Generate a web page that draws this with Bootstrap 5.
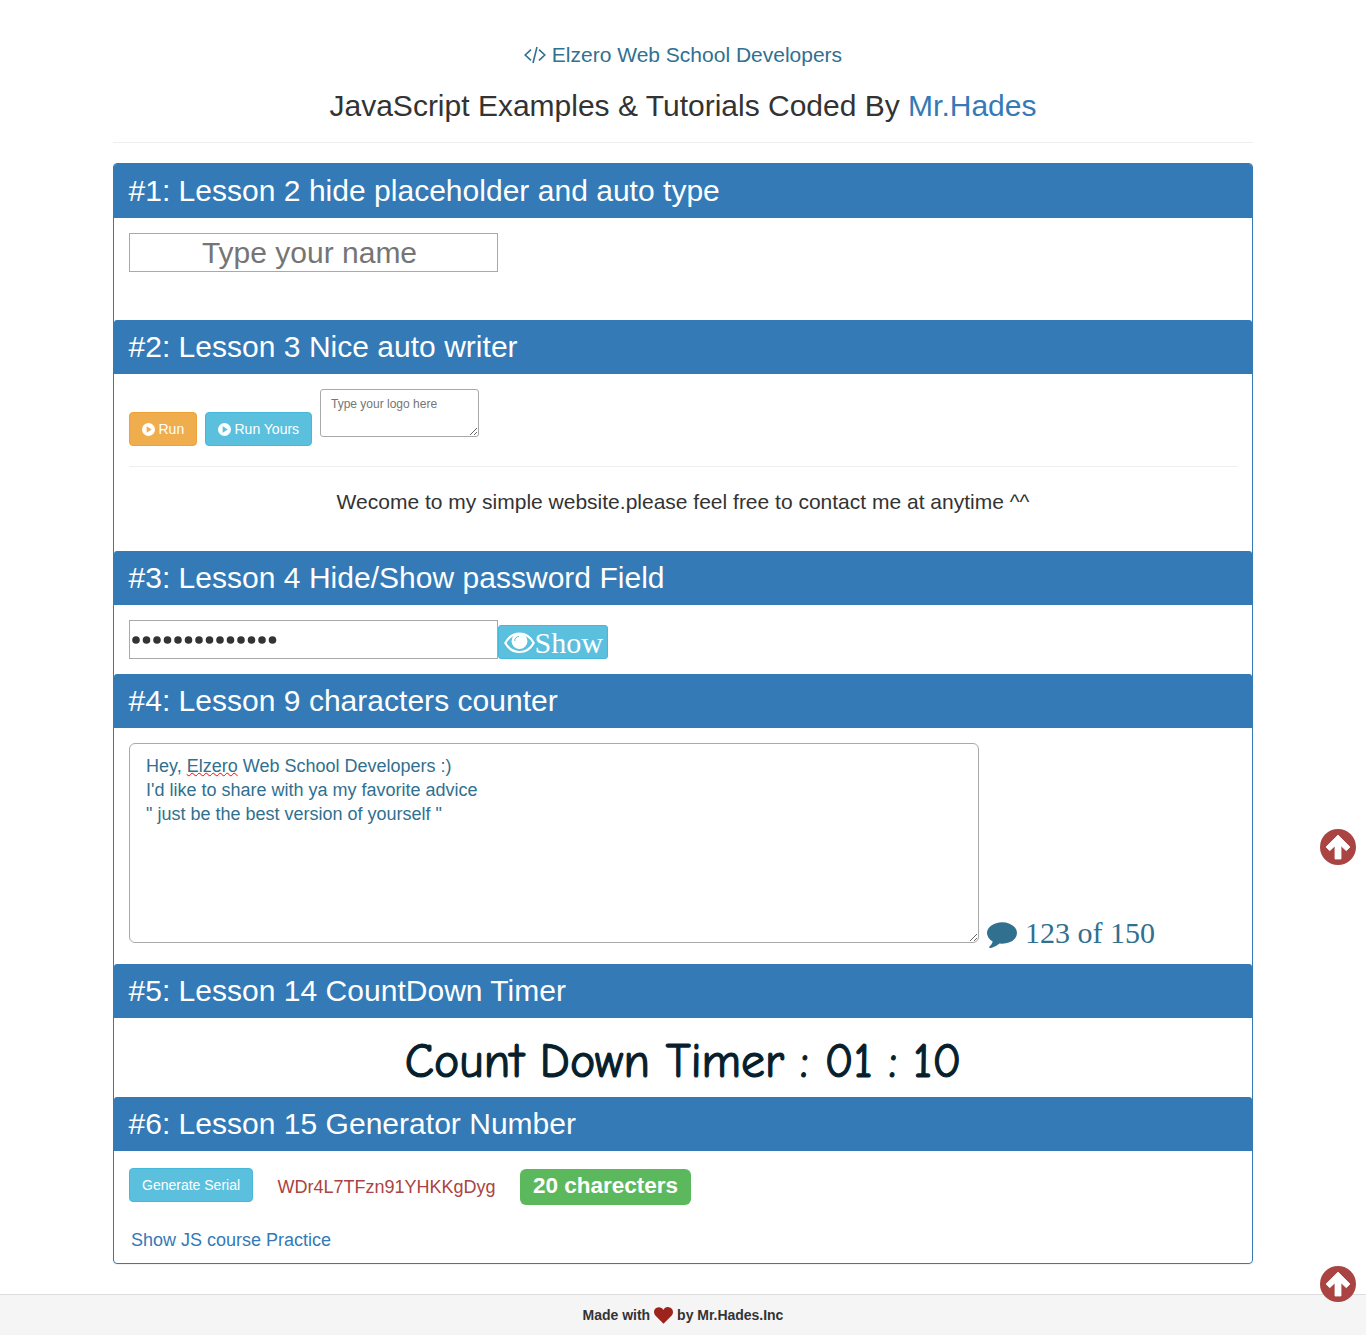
<!DOCTYPE html>
<html lang="en">
<head>
<meta charset="utf-8">
<meta name="viewport" content="width=device-width, initial-scale=1">
<title>Elzero Web School Developers</title>
<link href="https://cdn.jsdelivr.net/npm/bootstrap@5.3.0/dist/css/bootstrap.min.css" rel="stylesheet">
<style>
body{font-family:"Liberation Sans",Arial,sans-serif;font-size:14px;color:#333;line-height:1.42857;height:1335px;overflow:hidden}
a{text-decoration:none;color:#337ab7}
svg{display:block;flex:none}
.wrap{width:1140px;padding-top:.1px}
.brandline{font-size:21px;line-height:30px;color:#31708f;margin-top:40px;height:30px;gap:6px}
.title{font-size:30px;line-height:33px;margin:19px 0 20px;height:33px}
.rule{height:1px;background:#eee}
.panelbox{border:1px solid #337ab7;border-radius:4px;margin-top:20px;height:1101px;box-shadow:0 1px 1px rgba(0,0,0,.05)}
.head{background:#337ab7;color:#fff;height:54px;padding:10px 14.5px;font-size:30px;line-height:33px;letter-spacing:.02px;margin:0;border-radius:3px 3px 0 0;font-weight:400}
.pane{padding:15px}
.pane-1{height:102px}.pane-2{height:177px}.pane-3{height:69px}.pane-4{height:236px}.pane-5{height:79px}
.runbar{height:57px;margin-bottom:20px}
.field{width:369px;height:39px;border:1px solid #a9a9a9;padding:1px 2px;font-size:30px;color:#333;line-height:35px;border-radius:0;background:#fff}
.field::placeholder{color:#757575}
.field-name{padding-right:10px}
.btnx{height:34px;border-radius:4px;color:#fff;font-size:14px;padding:1px 12px 0;border:1px solid;white-space:nowrap}
.btn-run{gap:4px;padding-left:11px}
.btn-run svg{margin-left:.5px}
.btn-o{background:#f0ad4e;border-color:#eea236;width:68px}
.btn-b{background:#5bc0de;border-color:#46b8da}
.btn-yours{width:107px}
.btn-gen{width:124px;padding-top:2px}
.logo-in{width:159px;height:48px;border:1px solid #a9a9a9;border-radius:3px;padding:5px 10px;font-size:12px;line-height:18px;resize:both}
.logo-in::placeholder{color:#757575}
.writer{font-size:21px;line-height:28px;margin-top:21px}
.show{font-family:"Liberation Serif",serif;font-size:30px;width:110px;border-radius:3px;padding:2px 4.5px 0;line-height:34px}
.advice{width:850px;height:200px;border:1px solid #a9a9a9;border-radius:6px;padding:10px 16px;font-size:18px;line-height:24px;color:#31708f;resize:both;overflow:auto}
.typo{text-decoration:underline wavy red 1px;text-underline-offset:0;text-decoration-skip-ink:none}
.counter{font-family:"Liberation Serif",serif;font-size:30px;line-height:34px;color:#31708f;padding-top:2px;margin-bottom:-1px}
.timer{font-family:"Comic Sans MS","Comic Neue","Lato",sans-serif;font-size:47.8px;line-height:64px;color:#071f2d;padding-top:12px;white-space:nowrap;-webkit-text-stroke:1.2px #071f2d}
.genrow{height:38px}
.serial{font-size:18px;color:#a94442;line-height:26px;margin:3px 24.5px 0}
.pill{background:#5cb85c;color:#fff;font-weight:700;font-size:22.5px;width:171px;height:36px;border-radius:6px;line-height:33px;margin-top:3px}
.practice{font-size:18px;line-height:26px;margin:23px 0 0 2px}
.foot{height:41px;margin-top:30px;background:#f5f5f5;border-top:1px solid #ddd;font-weight:700;font-size:14px;gap:4px}
.foot span{padding-top:1px;letter-spacing:-.02px}
.gotop{position:absolute;left:1320px}
.top-a{top:829px}.top-b{top:1266px}
</style>
<script src="https://cdn.jsdelivr.net/npm/bootstrap@5.3.0/dist/js/bootstrap.bundle.min.js"></script>
</head>
<body class="position-relative bg-white">
<div class="wrap mx-auto">
  <div class="brandline d-flex justify-content-center align-items-center">
    <svg width="22" height="18" viewBox="0 0 22 18" fill="none" stroke="#31708f" stroke-width="1.6"><path d="M7 3.6 1.2 9 7 14.4M15 3.6 20.8 9 15 14.4M13 1 9 17"/></svg>
    <span>Elzero Web School Developers</span>
  </div>
  <h1 class="title text-center fw-normal">JavaScript Examples &amp; Tutorials Coded By <a href="#">Mr.Hades</a></h1>
  <div class="rule"></div>
  <main class="panelbox">
    <h2 class="head">#1: Lesson 2 hide placeholder and auto type</h2>
    <div class="pane pane-1"><input class="field field-name text-center d-block" placeholder="Type your name"></div>
    <h2 class="head">#2: Lesson 3 Nice auto writer</h2>
    <div class="pane pane-2">
      <div class="runbar d-flex gap-2">
        <button class="btnx btn-run btn-o d-flex align-items-center align-self-end"><svg width="13" height="13" viewBox="0 0 12 12"><path fill="#fff" fill-rule="evenodd" d="M6 0a6 6 0 1 0 0 12A6 6 0 0 0 6 0ZM4.3 3.1 9 6 4.3 8.9Z"/></svg>Run</button>
        <button class="btnx btn-run btn-b btn-yours d-flex align-items-center align-self-end"><svg width="13" height="13" viewBox="0 0 12 12"><path fill="#fff" fill-rule="evenodd" d="M6 0a6 6 0 1 0 0 12A6 6 0 0 0 6 0ZM4.3 3.1 9 6 4.3 8.9Z"/></svg>Run Yours</button>
        <textarea class="logo-in" placeholder="Type your logo here"></textarea>
      </div>
      <div class="rule"></div>
      <div class="writer text-center">Wecome to my simple website.please feel free to contact me at anytime ^^</div>
    </div>
    <h2 class="head">#3: Lesson 4 Hide/Show password Field</h2>
    <div class="pane pane-3 d-flex align-items-end">
      <div class="field d-flex align-items-center"><svg width="148" height="8" viewBox="0 0 148 8"><path d="M4 4H141" fill="none" stroke="#333" stroke-width="7.6" stroke-linecap="round" stroke-dasharray="0 10.5"/></svg></div>
      <button class="btnx btn-b show d-flex align-items-center"><svg width="31" height="22" viewBox="0 0 31 22"><path d="M1.3 11C8-1.5 23-1.5 29.7 11 23 23 8 23 1.3 11Z" fill="none" stroke="#fff" stroke-width="2.2"/><circle cx="15.5" cy="9.2" r="7.9" fill="#fff"/><path d="M10.7 9C10.7 6.5 12.5 4.6 15 4.4" fill="none" stroke="#5bc0de" stroke-width="1"/></svg>Show</button>
    </div>
    <h2 class="head">#4: Lesson 9 characters counter</h2>
    <div class="pane pane-4 d-flex align-items-start">
      <div class="advice" contenteditable="true" spellcheck="false">Hey, <span class="typo">Elzero</span> Web School Developers :)<br>I'd like to share with ya my favorite advice<br>" just be the best version of yourself "</div>
      <div class="counter d-flex align-items-center align-self-end ms-2"><svg class="me-2" width="30" height="30" viewBox="0 0 1792 1792"><path fill="#31708f" d="M1792 896q0 174-120 321.5t-326 233-450 85.5q-70 0-145-8-198 175-460 242-49 14-114 22-17 2-30.5-9t-17.500-29v-1q-3-4-.5-12t2-10 4.500-9.500l6-9 7-8.500 8-9q7-8 31-34.500t34.500-38 31-39.500 32.500-51 27-59 26-76q-157-89-247.500-220t-90.500-281q0-130 71-248.500t191-204.500 286-136.500 348-50.500q244 0 450 85.500t326 233 120 321.500z"/></svg><span>123 of 150</span></div>
    </div>
    <h2 class="head">#5: Lesson 14 CountDown Timer</h2>
    <div class="pane-5 timer text-center">Count Down Timer : 01 : 10</div>
    <h2 class="head">#6: Lesson 15 Generator Number</h2>
    <div class="pane">
      <div class="genrow d-flex align-items-center">
        <button class="btnx btn-b btn-gen">Generate Serial</button>
        <span class="serial">WDr4L7TFzn91YHKKgDyg</span>
        <span class="pill text-center">20 charecters</span>
      </div>
      <a href="#" class="practice d-block">Show JS course Practice</a>
    </div>
  </main>
</div>
<footer class="foot d-flex justify-content-center align-items-center"><span>Made with</span><svg width="19" height="17" viewBox="0 0 19 17"><path fill="#9c241c" d="M9.5 16.7 1.3 8.6C-.9 6-.2 2 2.6.7 5.2-.5 8 .4 9.500 2.900 11-.4 13.800-.5 16.400.7 19.200 2 19.900 6 17.700 8.600Z"/></svg><span>by Mr.Hades.Inc</span></footer>
<a href="#" class="gotop top-a"><svg width="36" height="36" viewBox="0 0 36 36"><circle cx="18" cy="18" r="18" fill="#a94442"/><path d="M18 6 30 18 26.300 21.700 21 16.800V30H15V16.800L9.700 21.700 6 18Z" fill="#fff" stroke="#fff" stroke-width=".8" stroke-linejoin="round"/></svg></a>
<a href="#" class="gotop top-b"><svg width="36" height="36" viewBox="0 0 36 36"><circle cx="18" cy="18" r="18" fill="#a94442"/><path d="M18 6 30 18 26.300 21.700 21 16.800V30H15V16.800L9.700 21.700 6 18Z" fill="#fff" stroke="#fff" stroke-width=".8" stroke-linejoin="round"/></svg></a>
</body>
</html>
